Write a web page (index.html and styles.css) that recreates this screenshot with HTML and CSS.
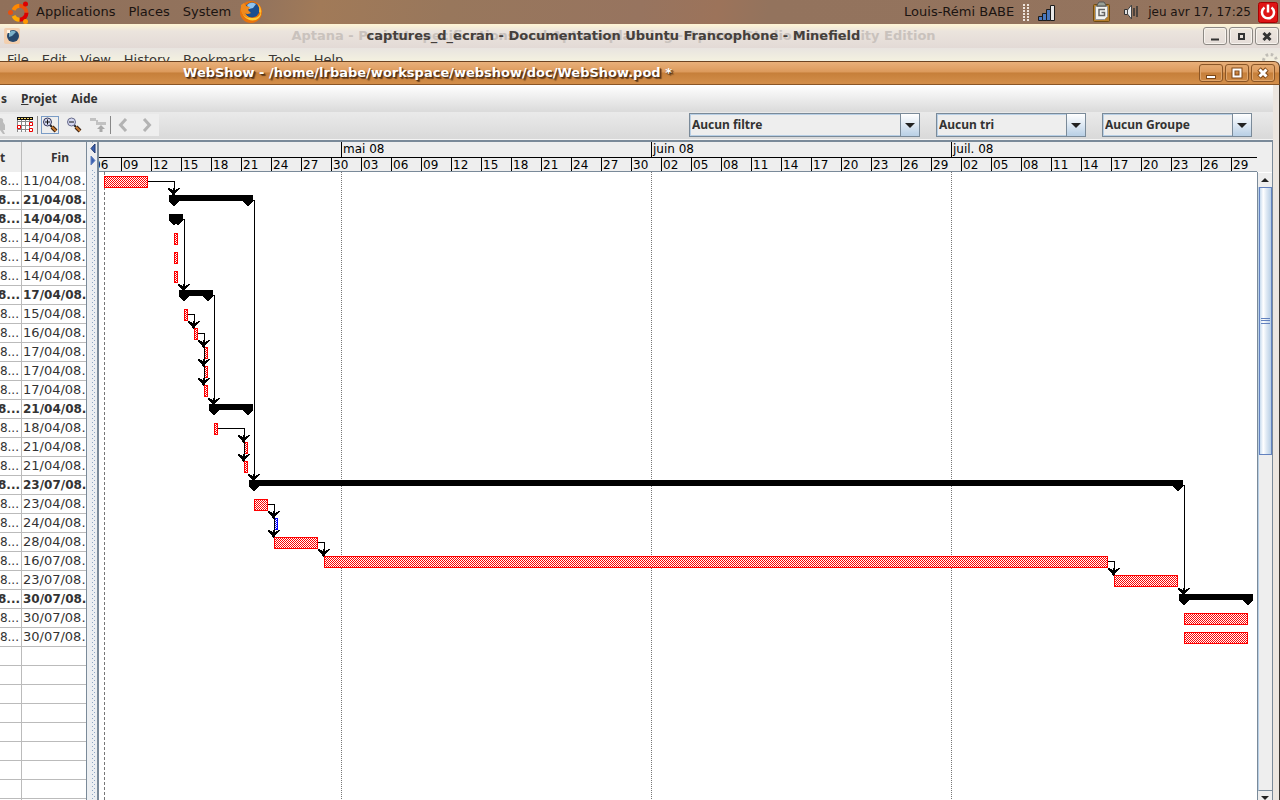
FILE: index.html
```
<!DOCTYPE html>
<html lang="fr">
<head>
<meta charset="utf-8">
<title>WebShow - /home/lrbabe/workspace/webshow/doc/WebShow.pod *</title>
<link rel="stylesheet" href="styles.css">
</head>
<body>
<header class="panel">
  <svg class="ubuntu" width="22" height="23" viewBox="0 0 22 23" aria-hidden="true">
    <g fill="none" stroke-width="4"><path d="M5.500 9a7 7 0 0 1 6-4.200" stroke="#f80"/><path d="M11.500 4.800a7 7 0 0 1 7 7" stroke="#e9500e"/><path d="M18.500 11.800a7 7 0 0 1-7 7" stroke="#d00"/><path d="M11.500 18.800a7 7 0 0 1-6-4" stroke="#fa0"/></g>
    <circle cx="2.500" cy="11.500" r="2.500" fill="#e9500e"/><circle cx="17.500" cy="3" r="2.500" fill="#d00"/><circle cx="17.500" cy="20.500" r="2.500" fill="#f90"/>
  </svg>
  <nav class="panel-menu"><button>Applications</button><button>Places</button><button>System</button></nav>
  <svg class="firefox" width="24" height="24" viewBox="0 0 24 24" aria-hidden="true">
    <circle cx="12" cy="12" r="11" fill="#e8730c"/><path d="M3 7C2 17 9 22 17 20q6-3 5-10 0 7-7 8C8 19 5 13 3 7z" fill="#fc3"/><circle cx="13" cy="10" r="7.500" fill="#1b4f8f"/><path d="M8 5q4-4 9-1l-3 4-4 1z" fill="#8fc4ee"/><path d="M2 5l3-2 2 3 4 1-2 3 3 3q-4 2-6 0 2 5 7 5-8 1-11-7z" fill="#f08a1d"/><path d="M19 4q4 4 3 9l-2-1q1-4-1-8z" fill="#fb3"/>
  </svg>
  <span class="user">Louis-Rémi BABE</span>
  <svg class="tray" width="130" height="24" viewBox="0 0 130 24" aria-hidden="true">
    <g stroke="#eee4dc" stroke-width="2" stroke-dasharray="2 1"><path d="M6 4v17M10 4v17"/></g>
    <g stroke="#1c1c1c" fill="#4a78c0"><path d="M20.500 16.500h4v4h-4zM24.500 13.500h4v7h-4zM28.500 9.500h4v11h-4z"/><path d="M32.500 5.500h4v15h-4z" fill="#e8e8e8"/></g>
    <rect x="75.500" y="4.500" width="16" height="17" rx="1" fill="#b9812c" stroke="#6f4c12"/><path d="M77.500 6.500h12v10l-3 3h-9z" fill="#f4f4f0" stroke="#999"/><path d="M79 5l2-3h5l2 3v1h-9z" fill="#99a096" stroke="#555"/><path d="M87 9.500h-6v6h5.500v-3h-3" fill="none" stroke="#666" stroke-width="1.500"/>
    <path d="M106.500 9.500h3v5h-3z" fill="#ddd" stroke="#333"/><path d="M109.500 10l4-5v14l-4-5z" fill="#ececec" stroke="#444"/><path d="M116 8v8M119 6v11" stroke="#333" stroke-width="1.500"/>
  </svg>
  <time class="clock">jeu avr 17, 17:25</time>
  <button class="power" aria-label="Quitter"><svg width="20" height="21" viewBox="0 0 20 21"><rect x=".5" y=".5" width="19" height="20" rx="2" fill="#df1515" stroke="#a00"/><path d="M6.500 5.500a6 6 0 1 0 7 0" fill="none" stroke="#fff" stroke-width="2.500"/><path d="M10 2.500v8" stroke="#fff" stroke-width="2.500"/></svg></button>
</header>

<section class="back-window">
  <div class="back-title">
    <svg class="back-icon" width="16" height="16" viewBox="0 0 16 16" aria-hidden="true"><rect width="16" height="16" rx="2" fill="#f3cfae"/><circle cx="9" cy="8" r="6" fill="#27476b"/><path d="M5 5q3-4 7-1l-4 4-3 1z" fill="#7bb0c8"/><path d="M3 2h3v3H3z" fill="#fff1e0"/></svg>
    <div class="titles"><span class="ghost">Aptana - Project specifications and Aptana planning - Aptana Studio Community Edition</span><span class="front">captures_d_ecran - Documentation Ubuntu Francophone - Minefield</span></div>
    <div class="controls">
      <button aria-label="Réduire"><svg width="22" height="16"><path d="M7 11.500h8" stroke="#333" stroke-width="2"/></svg></button>
      <button aria-label="Agrandir"><svg width="22" height="16"><path d="M9 6h5v5h-5z" fill="none" stroke="#333" stroke-width="2"/></svg></button>
      <button aria-label="Fermer"><svg width="22" height="16"><path d="M7.500 5l7 7M14.500 5l-7 7" stroke="#333" stroke-width="3"/></svg></button>
    </div>
  </div>
  <nav class="back-menu">
    <button>File</button><button>Edit</button><button>View</button><button>History</button><button>Bookmarks</button><button>Tools</button><button>Help</button>
    <svg class="throbber" width="18" height="18" viewBox="0 0 18 18" aria-hidden="true"><circle cx="9" cy="9" r="6.500" fill="none" stroke="#c0bdb6" stroke-width="3" stroke-dasharray="2.500 2.600"/></svg>
  </nav>
</section>

<main class="window">
  <div class="title">
    <h1>WebShow - /home/lrbabe/workspace/webshow/doc/WebShow.pod *</h1>
    <div class="controls warm">
      <button aria-label="Réduire"><svg width="22" height="16"><path d="M6 10h10v4H6z" fill="#7d4717"/><path d="M7 12h8" stroke="#fff" stroke-width="2"/></svg></button>
      <button aria-label="Agrandir"><svg width="22" height="16"><path d="M7.500 4.500h7v7h-7z" fill="none" stroke="#7d4717" stroke-width="4"/><path d="M7.500 4.500h7v7h-7z" fill="none" stroke="#fff" stroke-width="2"/></svg></button>
      <button aria-label="Fermer"><svg width="22" height="16"><path d="M7 4l8 8M15 4l-8 8" stroke="#7d4717" stroke-width="5"/><path d="M7.500 4.500l7 7M14.500 4.500l-7 7" stroke="#fff" stroke-width="3"/></svg></button>
    </div>
  </div>
  <div class="client">
    <nav class="menubar"><button>s</button><button><u>P</u>rojet</button><button>Aide</button></nav>
    <div class="toolbar">
      <div class="tools">
        <button class="cut" aria-label="Ressources"><svg width="7" height="18"><path d="M0 2q4 0 3 4l2 3v5H3l2 4H3l-3-4z" fill="#bbb"/></svg></button>
        <button aria-label="Calendrier"><svg width="16" height="16" viewBox="0 0 16 16"><path fill="#fff" d="M0 0h16v14H0z"/><path d="M0 4.500h16M0 8.500h16M0 12.500h16M.5 1v14M4.500 1v14M8.500 1v14M12.500 1v14" stroke="#888"/><path d="M0 0h16v3H0z" fill="#111"/><path d="M1 1.500h14" stroke="#fd6" stroke-dasharray="2 1"/><path d="M.5 8.500h3v3h-3zM12.500 5.500h3v3h-3zM12.500 11.500h3v3h-3z" fill="#fff" stroke="#e00"/></svg></button>
        <span class="sep"></span>
        <button class="on" aria-label="Zoom avant"><svg width="16" height="16" viewBox="0 0 16 16"><path d="M8 8l2 2" stroke="#222" stroke-width="2"/><path d="M10 10l4 4" stroke="#3a2010" stroke-width="4"/><path d="M10 10l4 4" stroke="#c87a30" stroke-width="2"/><circle cx="5.500" cy="5" r="4" fill="#d3d7ef" stroke="#33365a"/><path d="M3 5h5M5.500 2.500v5" stroke="#111"/></svg></button>
        <button aria-label="Zoom arrière"><svg width="16" height="16" viewBox="0 0 16 16"><path d="M8 8l2 2" stroke="#222" stroke-width="2"/><path d="M10 10l4 4" stroke="#3a2010" stroke-width="4"/><path d="M10 10l4 4" stroke="#c87a30" stroke-width="2"/><circle cx="5.500" cy="5" r="4" fill="#d3d7ef" stroke="#66698a"/><path d="M3 5h5" stroke="#111"/></svg></button>
        <button aria-label="Aller à"><svg width="16" height="16" viewBox="0 0 16 16"><path d="M0 1h6v3H0zM6 3h2v3H6zM6 5h10v3H6z" fill="#c2c2c2"/><path d="M9.500 15v-3H7l4-4 4 4h-2.500v3z" fill="#aaa"/></svg></button>
        <span class="sep"></span>
        <button aria-label="Précédent"><svg width="10" height="14" viewBox="0 0 10 14"><path d="M8 1L2.500 7 8 13" fill="none" stroke="#b3b3b3" stroke-width="3"/></svg></button>
        <button aria-label="Suivant"><svg width="10" height="14" viewBox="0 0 10 14"><path d="M2 1l5.500 6L2 13" fill="none" stroke="#b3b3b3" stroke-width="3"/></svg></button>
      </div>
      <div class="combos">
        <div class="combo filter"><select aria-label="Filtre"><option>Aucun filtre</option></select><i></i></div>
        <div class="combo"><select aria-label="Tri"><option>Aucun tri</option></select><i></i></div>
        <div class="combo"><select aria-label="Groupe"><option>Aucun Groupe</option></select><i></i></div>
      </div>
    </div>
    <div class="split">
      <div class="sheet">
        <table>
          <thead><tr><th>t</th><th>Fin</th></tr></thead>
          <tbody>
            <tr><td><bdi>8...</bdi></td><td>11/04/08.</td></tr>
            <tr class="b"><td><bdi>08...</bdi></td><td>21/04/08.</td></tr>
            <tr class="b"><td><bdi>08...</bdi></td><td>14/04/08.</td></tr>
            <tr><td><bdi>8...</bdi></td><td>14/04/08.</td></tr>
            <tr><td><bdi>8...</bdi></td><td>14/04/08.</td></tr>
            <tr><td><bdi>8...</bdi></td><td>14/04/08.</td></tr>
            <tr class="b"><td><bdi>08...</bdi></td><td>17/04/08.</td></tr>
            <tr><td><bdi>8...</bdi></td><td>15/04/08.</td></tr>
            <tr><td><bdi>8...</bdi></td><td>16/04/08.</td></tr>
            <tr><td><bdi>8...</bdi></td><td>17/04/08.</td></tr>
            <tr><td><bdi>8...</bdi></td><td>17/04/08.</td></tr>
            <tr><td><bdi>8...</bdi></td><td>17/04/08.</td></tr>
            <tr class="b"><td><bdi>08...</bdi></td><td>21/04/08.</td></tr>
            <tr><td><bdi>8...</bdi></td><td>18/04/08.</td></tr>
            <tr><td><bdi>8...</bdi></td><td>21/04/08.</td></tr>
            <tr><td><bdi>8...</bdi></td><td>21/04/08.</td></tr>
            <tr class="b"><td><bdi>08...</bdi></td><td>23/07/08.</td></tr>
            <tr><td><bdi>8...</bdi></td><td>23/04/08.</td></tr>
            <tr><td><bdi>8...</bdi></td><td>24/04/08.</td></tr>
            <tr><td><bdi>8...</bdi></td><td>28/04/08.</td></tr>
            <tr><td><bdi>8...</bdi></td><td>16/07/08.</td></tr>
            <tr><td><bdi>8...</bdi></td><td>23/07/08.</td></tr>
            <tr class="b"><td><bdi>08...</bdi></td><td>30/07/08.</td></tr>
            <tr><td><bdi>8...</bdi></td><td>30/07/08.</td></tr>
            <tr><td><bdi>8...</bdi></td><td>30/07/08.</td></tr>
            <tr><td></td><td></td></tr><tr><td></td><td></td></tr><tr><td></td><td></td></tr><tr><td></td><td></td></tr>
            <tr><td></td><td></td></tr><tr><td></td><td></td></tr><tr><td></td><td></td></tr><tr><td></td><td></td></tr><tr><td></td><td></td></tr>
          </tbody>
        </table>
      </div>
      <div class="divider"><svg width="6" height="26" viewBox="0 0 6 26" aria-hidden="true"><path d="M5 1v9L1 5.500z" fill="#3a5fae" stroke="#223a70"/><path d="M1 13v9l4-4.500z" fill="#3a5fae" stroke="#6382bf"/></svg></div>
      <div class="gantt">
        <div class="scale">
          <div class="months"><span class="m-first"></span><span class="m-mai">mai 08</span><span class="m-juin">juin 08</span><span>juil. 08</span></div>
          <div class="days"><span class="d-first">06</span><span>09</span><span>12</span><span>15</span><span>18</span><span>21</span><span>24</span><span>27</span><span>30</span><span>03</span><span>06</span><span>09</span><span>12</span><span>15</span><span>18</span><span>21</span><span>24</span><span>27</span><span>30</span><span>02</span><span>05</span><span>08</span><span>11</span><span>14</span><span>17</span><span>20</span><span>23</span><span>26</span><span>29</span><span>02</span><span>05</span><span>08</span><span>11</span><span>14</span><span>17</span><span>20</span><span>23</span><span>26</span><span>29</span></div>
        </div>
        <div class="corner"></div>
        <div class="chart">
          <svg class="bars" width="1158" height="2000" viewBox="99 172 1158 2000" shape-rendering="crispEdges" role="img" aria-label="Diagramme de Gantt">
            <defs>
              <pattern id="red" width="2" height="2" patternUnits="userSpaceOnUse"><path d="M0 0h1v1H0zM1 1h1v1H1z" fill="#f00"/></pattern>
              <pattern id="blue" width="2" height="2" patternUnits="userSpaceOnUse"><path d="M0 0h1v1H0zM1 1h1v1H1z" fill="#00f"/></pattern>
              <path id="tip" d="M-5-6h1v1h2v1h1v-2h2v2h1v-1h2v-1h2v1h-1v1h-1v1h-1v1h-1v1h-1v2h-1v1h-1v-1h-1v-2h-1v-1h-1v-1h-1v-1h-1v-1h-1z"/>
              <path id="foot" d="M-5 0H5V7H4V8H3V9H2V10H1V11H-1V10H-2V9H-3V8H-4V7H-5z"/>
            </defs>
            <path d="M104.500 172V2172" stroke="#777" stroke-dasharray="3 2"/>
            <path d="M341.500 172V2172M651.500 172V2172M951.500 172V2172" stroke="#777" stroke-dasharray="1 1"/>
            <g fill="#fff">
              <path d="M104 176h44v12h-44zM324 556h784v12h-784z"/>
            </g>
            <g fill="url(#red)" stroke="#f00">
              <path d="M104.500 176.500h43v11h-43z"/>
              <path d="M174.500 233.500h3v11h-3zM174.500 252.500h3v11h-3zM174.500 271.500h3v11h-3z"/>
              <path d="M184.500 309.500h3v11h-3zM194.500 328.500h3v11h-3zM204.500 347.500h3v11h-3zM204.500 366.500h3v11h-3zM204.500 385.500h3v11h-3z"/>
              <path d="M214.500 423.500h3v11h-3zM244.500 442.500h3v11h-3zM244.500 461.500h3v11h-3z"/>
              <path d="M254.500 499.500h13v11h-13zM274.500 537.500h43v11h-43zM324.500 556.500h783v11h-783zM1114.500 575.500h63v11h-63z"/>
              <path d="M1184.500 613.500h63v11h-63zM1184.500 632.500h63v11h-63z"/>
            </g>
            <path d="M274.500 518.500h3v11h-3z" fill="url(#blue)" stroke="#00f"/>
            <path d="M169 195h84v6h-84zM169 214h14v6h-14zM179 290h34v6h-34zM209 404h44v6h-44zM249 480h934v6h-934zM1179 594h74v6h-74z"/>
            <use href="#foot" x="174" y="195"/><use href="#foot" x="248" y="195"/>
            <use href="#foot" x="174" y="214"/><use href="#foot" x="178" y="214"/>
            <use href="#foot" x="184" y="290"/><use href="#foot" x="208" y="290"/>
            <use href="#foot" x="214" y="404"/><use href="#foot" x="248" y="404"/>
            <use href="#foot" x="254" y="480"/><use href="#foot" x="1178" y="480"/>
            <use href="#foot" x="1184" y="594"/><use href="#foot" x="1248" y="594"/>
            <g fill="none" stroke="#000">
              <path d="M148 181.500h26.500v13M253 200.500h1.500V480M183 219.500h1.500V290M213 295.500h1.500V404M188 314.500h6.500v13M198 333.500h6.500v51"/>
              <path d="M218 428.500h26.500v32M1183 485.500h1.500V594M268 504.500h6.500v32M318 542.500h6.500v13M1108 561.500h6.500v13"/>
            </g>
            <use href="#tip" x="174" y="194"/><use href="#tip" x="184" y="290"/><use href="#tip" x="194" y="327"/><use href="#tip" x="204" y="346"/><use href="#tip" x="204" y="365"/><use href="#tip" x="204" y="384"/><use href="#tip" x="214" y="404"/><use href="#tip" x="244" y="441"/><use href="#tip" x="244" y="460"/><use href="#tip" x="254" y="480"/><use href="#tip" x="274" y="517"/><use href="#tip" x="274" y="536"/><use href="#tip" x="324" y="555"/><use href="#tip" x="1114" y="574"/><use href="#tip" x="1184" y="594"/>
          </svg>
        </div>
        <div class="scroll">
          <button class="up" aria-label="Haut"><svg width="8" height="4"><path d="M0 4L4 0l4 4z" fill="#222"/></svg></button>
          <div class="track"><div class="thumb"><i></i></div></div>
          <button class="down" aria-label="Bas"><svg width="8" height="4"><path d="M0 0h8L4 4z" fill="#222"/></svg></button>
        </div>
      </div>
    </div>
  </div>
</main>
</body>
</html>
```
FILE: styles.css
```
* { box-sizing: border-box; }
body {
  margin: 0; height: 100vh; overflow: hidden;
  display: flex; flex-direction: column;
  background: #ece9e4; color: #000;
  font: 13px/16px "DejaVu Sans", sans-serif;
}
button { border: 0; padding: 0; margin: 0; background: none; font: inherit; color: inherit; white-space: nowrap; }
svg { display: block; flex: none; }

.panel {
  flex: none; height: 24px; padding-left: 8px; padding-right: 2px;
  display: flex; align-items: center;
  background: linear-gradient(100deg, #90705a 0, #92735d 20%, #a17a58 25%, #98775c 35%, #97745f 50%, #9c735a 56%, #93735d 60%, #94745e 100%);
  color: #1b1411;
}
.panel-menu { display: flex; gap: 13px; margin-left: 6px; }
.firefox { margin-left: 8px; }
.user { margin-left: auto; }
.tray { margin-left: 4px; }
.clock { margin-right: 7px; font-size: 12px; }

.back-window { flex: none; height: 37px; overflow: hidden; }
.back-title {
  height: 24px; display: flex; align-items: center; padding: 0 1px 0 4px;
  background: linear-gradient(#fff5d4, #ebe4dd 30%, #e3dad6);
}
.titles { flex: 1; display: grid; justify-items: center; font-weight: bold; padding-left: 4px; white-space: nowrap; }
.titles span { grid-area: 1 / 1; }
.ghost { color: #c9c2bd; }
.front { color: #45403c; }
.controls { display: flex; gap: 2px; }
.controls button { width: 24px; height: 18px; border: 1px solid #8d8984; border-radius: 3px; box-shadow: inset 0 0 0 1px #f7f3ee; }
.back-menu {
  height: 13px; padding: 4px 1px 0 7px; display: flex; gap: 13px;
  align-items: flex-start; color: #3b3835;
  background: linear-gradient(#e8e4e0, #f4f1e0);
}
.throbber { margin-left: auto; }

.window { flex: 1; min-height: 0; display: flex; flex-direction: column; }
.title {
  flex: none; height: 24px; display: flex; align-items: center; padding: 0 4px 0 8px;
  border-top: 1px solid #6b4423; border-bottom: 1px solid #8a5526; border-right: 1px solid #5a3a1e;
  border-radius: 0 6px 0 0;
  background: linear-gradient(#e9b07a, #dc9a5c 45%, #c67f3a 50%, #d38f4b);
}
.title h1 {
  flex: 1; margin: 0; padding-right: 352px; text-align: center; white-space: nowrap;
  font-size: 13px; line-height: 16px; color: #fff;
  text-shadow: 1px 1px 1px #4a2c10, 2px 2px 1px #6b4423;
}
.controls.warm button { border-color: #8a5526; box-shadow: inset 0 0 0 1px #dfa66d; }

.client {
  flex: 1; min-height: 0; display: flex; flex-direction: column;
  border-right: 1px solid #3a3632; padding-right: 6px;
  background: #ece6e0;
}
.menubar {
  flex: none; height: 27px; display: flex; align-items: center; gap: 14px; padding-left: 1px;
  background: linear-gradient(#fff, #dadada);
  font: bold 12px/16px "Noto Sans", "DejaVu Sans", sans-serif; color: #333;
}
.toolbar {
  flex: none; height: 28px; display: flex; align-items: flex-start; justify-content: space-between;
  padding-top: 1px;
  background: linear-gradient(#eaeaea, #d9d9d9); border-bottom: 1px solid #f4f4f4;
}
.tools { display: flex; align-items: center; height: 22px; margin-top: 1px; background: #eee; }
.tools button { width: 24px; height: 20px; display: grid; place-items: center; }
.tools .cut { width: 13px; justify-items: start; }
.tools .on { width: 18px; height: 18px; border: 1px solid #7a9cc6; margin: 0 3px; }
.tools .sep { width: 1px; height: 18px; background: #888; }
.combos { display: flex; gap: 16px; padding-right: 21px; }
.combo { position: relative; width: 150px; height: 24px; }
.filter { width: 231px; }
.combo select {
  appearance: none; width: 100%; height: 24px; margin: 0; padding: 0 20px 0 2px;
  border: 1px solid #7a8a99; border-radius: 0; box-shadow: inset 0 0 0 1px #b8cfe5;
  background: #eee; color: #333; font: bold 12px/16px "Noto Sans", "DejaVu Sans", sans-serif;
}
.combo i {
  position: absolute; top: 1px; right: 1px; bottom: 1px; width: 19px; pointer-events: none;
  border-left: 1px solid #7a8a99; background: linear-gradient(#fff, #dde8f3 50%, #b8cfe5);
}
.combo i::after { content: ""; position: absolute; left: 4px; top: 9px; border: 5px solid transparent; border-top-color: #222; border-bottom: 0; }

.split { flex: 1; min-height: 0; display: flex; border-top: 2px solid #7a8a99; background: #eee; }
.sheet { flex: none; width: 87px; overflow: hidden; border-right: 1px solid #7a8a99; background: #fff; }
.sheet table { width: 86px; table-layout: fixed; border-collapse: separate; border-spacing: 0; color: #333; }
.sheet th { height: 30px; padding: 1px 0 0; background: #eee; border-right: 1px solid #bbb; font: bold 12px/16px "Noto Sans", "DejaVu Sans", sans-serif; }
.sheet th:first-child { width: 22px; text-align: left; }
.sheet th:last-child { border-right: 0; padding-left: 12px; }
.sheet td { height: 19px; padding: 0; border-bottom: 1px solid #bbb; font-size: 13px; line-height: 18px; white-space: nowrap; overflow: hidden; }
.sheet td:first-child { border-right: 1px solid #bbb; padding-right: 2px; direction: rtl; font-size: 12px; }
.sheet td:last-child { padding-left: 1px; }
.sheet .b td { font-weight: bold; font-size: 12px; }
.divider {
  flex: none; width: 10px; padding: 1px 0 0 3px;
  background:
    linear-gradient(#8fa8c6 1px, transparent 1px) 5px 0 / 1px 4px repeat-y,
    linear-gradient(#8fa8c6 1px, transparent 1px) 7px 2px / 1px 4px repeat-y,
    #eceff2;
}
.divider svg { background: #eee; }

.gantt {
  flex: 1; min-width: 0; display: grid;
  grid-template: 30px 1fr / 1fr 16px;
  border-left: 2px solid #7a8a99;
}
.scale { min-width: 0; overflow: hidden; border-bottom: 1px solid #7a8a99; font-size: 12px; line-height: 15px; }
.months { display: flex; height: 15px; }
.months span { flex: none; border-left: 1px solid #000; padding-left: 1px; }
.months .m-first { width: 242px; border: 0; }
.months .m-mai { width: 310px; }
.months .m-juin { width: 300px; }
.days { display: flex; height: 15px; border-top: 1px solid #000; line-height: 14px; }
.days span { flex: none; width: 30px; border-left: 1px solid #000; padding-left: 1px; }
.days .d-first { width: 22px; border: 0; padding: 0; text-indent: -6px; overflow: hidden; }
.corner { background: #eee; border-right: 1px solid #7a8a99; }
.chart { min-width: 0; min-height: 0; overflow: hidden; background: #fff; }
.scroll {
  min-height: 0; display: flex; flex-direction: column;
  border-left: 1px solid #7a8a99; border-right: 1px solid #7a8a99; background: #eee;
}
.up { height: 15px; display: grid; place-items: center; border-top: 1px solid #fff; }
.track { flex: 1; border-left: 1px solid #b8cfe5; border-bottom: 1px solid #7a8a99; }
.thumb {
  height: 44.5%; display: grid; place-items: center; border: 1px solid #6382bf;
  background: linear-gradient(90deg, #c8dbee, #fff 30%, #dde8f3 60%, #b8cfe5);
}
.thumb i { width: 9px; height: 6px; border-top: 1px solid #6382bf; border-bottom: 1px solid #6382bf; background: linear-gradient(#6382bf, #6382bf) 0 1px / 9px 1px no-repeat; }
.down { height: 9px; display: grid; place-items: end center; }
```
